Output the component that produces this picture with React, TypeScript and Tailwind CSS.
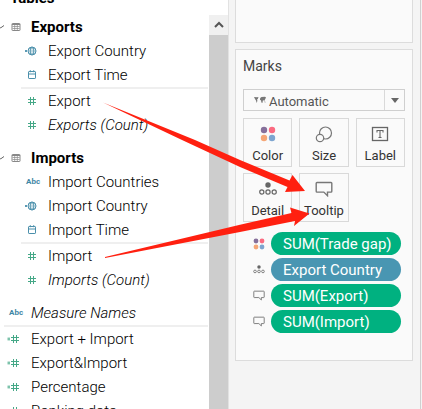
import type { ReactNode } from 'react';

type Kind = 'geo' | 'date' | 'number' | 'calc' | 'text';

const glyphs: Record<Kind, ReactNode> = {
  geo: (
    <svg viewBox="0 0 14 12" className="h-3 w-3.5" fill="none" stroke="#4a8fab">
      <circle cx="8" cy="6" r="4" />
      <ellipse cx="8" cy="6" rx="1.7" ry="4" strokeWidth=".8" />
      <path d="M4 6h8M5 3.800h6M5 8.200h6" strokeWidth=".7" />
      <path d="M1 5.500h2M1 6.500h2" strokeWidth=".9" />
    </svg>
  ),
  date: (
    <svg viewBox="0 0 14 12" className="h-3 w-3.5" fill="none" stroke="#4a8fab">
      <rect x="4.500" y="2.500" width="7" height="7" rx=".6" />
      <path d="M4.500 5h7M6.300 1.200v2M9.700 1.200v2" />
    </svg>
  ),
  number: (
    <svg viewBox="0 0 14 12" className="h-3 w-3.5" fill="none" stroke="#45a887">
      <path d="M4 4.500h8M4 7.500h8M6.500 2v8M9.500 2v8" />
    </svg>
  ),
  calc: (
    <svg viewBox="0 0 14 12" className="h-3 w-3.5" fill="none" stroke="#45a887">
      <path d="M4 4.500h8M4 7.500h8M6.500 2v8M9.500 2v8M.5 5.200h2.500M.5 6.800h2.500" />
    </svg>
  ),
  text: <span className="pl-0.5 text-[8px] font-bold text-[#3f86a4]">Abc</span>,
};

function Field({ kind, label, italic, nested }: { kind: Kind; label: string; italic?: boolean; nested?: boolean }) {
  return (
    <li className={`flex h-6 items-center ${nested ? 'pl-6' : 'pl-[7px]'}`}>
      <span className="flex w-6 shrink-0 items-center">{glyphs[kind]}</span>
      <span className={`whitespace-nowrap ${italic ? 'italic' : ''}`}>{label}</span>
    </li>
  );
}

function TableName({ label }: { label: string }) {
  return (
    <h3 className="flex h-6 items-center font-bold text-black">
      <svg viewBox="0 0 5 12" className="h-3 w-[5px]" fill="none" stroke="#666">
        <path d="M-2 4l2.500 3L4 4.500" />
      </svg>
      <svg viewBox="0 0 10 10" className="mr-2.5 ml-1.5 h-2.5 w-2.5" fill="none" stroke="#888">
        <rect x="1" y="1.500" width="8" height="7" rx=".5" />
        <path d="M1 2.500h8" />
        <path d="M1.500 4.500h7M1.500 6.500h7M3.700 3v5M6.300 3v5" strokeWidth=".7" />
      </svg>
      {label}
    </h3>
  );
}

const Rule = ({ nested }: { nested?: boolean }) => (
  <hr className={`mr-px border-t-2 border-[#efefef] ${nested ? 'ml-[21px]' : 'ml-1'}`} />
);

function ColorDots({ className }: { className: string }) {
  return (
    <svg viewBox="0 0 16 16" className={className}>
      <circle cx="4" cy="4" r="3.200" fill="#86709b" />
      <circle cx="12" cy="4" r="3.200" fill="#fb6a80" />
      <circle cx="4" cy="12" r="3.200" fill="#f5a676" />
      <circle cx="12" cy="12" r="3.200" fill="#7da5d0" />
    </svg>
  );
}

function DetailDots({ className }: { className: string }) {
  return (
    <svg viewBox="0 0 18 14" className={className} fill="none" stroke="#666" strokeWidth="1.2">
      <circle cx="9" cy="3" r="2.700" fill="#666" stroke="none" />
      <circle cx="2.800" cy="10" r="2.100" />
      <circle cx="9" cy="10" r="2.100" />
      <circle cx="15.200" cy="10" r="2.100" />
    </svg>
  );
}

function Bubble({ className }: { className: string }) {
  return (
    <svg viewBox="0 0 18 16" className={className} fill="none" stroke="#777" strokeWidth="1.4">
      <path d="M2 1.500h14q.8 0 .8.8v8q0 .8-.8.8h-3.500v3.600L8.800 11.100H2q-.8 0-.8-.8v-8q0-.8.800-.8z" />
    </svg>
  );
}

function MarkButton({ label, children }: { label: string; children: ReactNode }) {
  return (
    <button type="button" className="flex h-[49px] flex-col items-center border border-[#d9d9d9] pt-1.5 text-[13px] leading-5 font-normal text-[#333]">
      <span className="mb-[3px] flex h-5 items-center">{children}</span>
      {label}
    </button>
  );
}

function Pill({ label, blue, children }: { label: string; blue?: boolean; children: ReactNode }) {
  return (
    <li className="flex items-center">
      <span className="flex w-7 justify-center pl-[3px]">{children}</span>
      <span className={`h-[23px] flex-1 rounded-full pl-3 text-[15px] leading-6 font-normal whitespace-nowrap text-white ${blue ? 'bg-[#4996b2]' : 'bg-[#00b180]'}`}>
        {label}
      </span>
    </li>
  );
}

export default function App() {
  return (
    <main className="relative flex h-screen overflow-hidden bg-[#f4f4f4] font-['Roboto',sans-serif] text-[15px] leading-6 font-light text-black">
      <section className="flex min-w-0 flex-1 bg-white">
        <div className="-mt-3.5 min-w-0 flex-1">
          <h2 className="mb-[5px] h-6 pl-2.5 font-bold text-black">Tables</h2>
          <TableName label="Exports" />
          <ul>
            <Field nested kind="geo" label="Export Country" />
            <Field nested kind="date" label="Export Time" />
          </ul>
          <Rule nested />
          <ul className="mb-[9px]">
            <Field nested kind="number" label="Export" />
            <Field nested kind="number" label="Exports (Count)" italic />
          </ul>
          <TableName label="Imports" />
          <ul>
            <Field nested kind="text" label="Import Countries" />
            <Field nested kind="geo" label="Import Country" />
            <Field nested kind="date" label="Import Time" />
          </ul>
          <Rule nested />
          <ul className="mb-[9px]">
            <Field nested kind="number" label="Import" />
            <Field nested kind="number" label="Imports (Count)" italic />
          </ul>
          <ul>
            <Field kind="text" label="Measure Names" italic />
          </ul>
          <Rule />
          <ul>
            <Field kind="calc" label="Export + Import" />
            <Field kind="calc" label="Export&Import" />
            <Field kind="calc" label="Percentage" />
            <Field kind="calc" label="Ranking data" />
          </ul>
        </div>
        <div className="mt-[15px] w-[19px] bg-[#cdcdcd]">
          <button type="button" aria-label="Scroll up" className="flex h-5 w-full items-center justify-center bg-[#f0f0f0]">
            <svg viewBox="0 0 10 8" className="h-2 w-2.5" fill="none" stroke="#555" strokeWidth="2">
              <path d="M1 6l4-4 4 4" />
            </svg>
          </button>
        </div>
      </section>

      <aside className="w-[194px] shrink-0 border-l border-l-[#e2e2e2] pl-1.5">
        <div className="mr-px h-full border-r border-[#d0d0d0] pr-[7px]">
          <div className="h-[43px] border border-t-0 border-[#dcdcdc] bg-[#fafafa]" />
          <section className="mt-1.5 h-[312px] border border-[#dcdcdc] bg-[#fafafa] px-[7px] pt-1">
            <h2 className="text-[14px] font-normal text-[#444]">Marks</h2>
            <div className="relative mt-[11px] flex h-[22px] items-center border border-[#cfcfcf]">
              <svg viewBox="0 0 12 8" className="absolute left-2.5 h-2 w-3" fill="#777">
                <path d="M0 1l3 .2L4.500 1 3.800 3 3 3.500l.4 1.300L2.700 7 2 4.500 1 3zM6.200 2l1.300-1L11 .8l1 .8-1 2-.8 1.500L9 4l-.6 3-1-.5L7 4.200 6 4zM10 5.500l1.500.3-.3 1z" />
              </svg>
              <select aria-label="Mark type" className="h-full w-full appearance-none bg-transparent pb-0.5 pl-[25px] text-[13px] font-normal text-[#555]">
                <option>Automatic</option>
              </select>
              <span className="pointer-events-none absolute inset-y-0 right-0 flex w-5 items-center justify-center border-l border-[#d9d9d9]">
                <svg viewBox="0 0 8 5" className="h-[5px] w-2" fill="#666">
                  <path d="M0 0h8L4 5z" />
                </svg>
              </span>
            </div>
            <div className="mt-[7px] grid grid-cols-3 gap-x-[7px] gap-y-1.5">
              <MarkButton label="Color"><ColorDots className="h-4 w-4" /></MarkButton>
              <MarkButton label="Size">
                <svg viewBox="0 0 18 17" className="h-[17px] w-[18px]" fill="none" stroke="#777" strokeWidth="1.2">
                  <circle cx="10.500" cy="7" r="6" />
                  <circle cx="5" cy="12" r="3.700" fill="#fafafa" />
                </svg>
              </MarkButton>
              <MarkButton label="Label">
                <svg viewBox="0 0 18 16" className="h-4 w-[18px]" fill="none" stroke="#666" strokeWidth="1.3">
                  <rect x="1.500" y="1.500" width="15" height="13" />
                  <path d="M6 6.500v-2h6v2M9 4.500v7M7.500 11.500h3" strokeWidth="1.100" />
                </svg>
              </MarkButton>
              <MarkButton label="Detail"><DetailDots className="h-3.5 w-[18px]" /></MarkButton>
              <MarkButton label="Tooltip"><Bubble className="h-4 w-[18px]" /></MarkButton>
            </div>
            <ul className="mt-2.5 flex flex-col gap-[3px] pr-1">
              <Pill label="SUM(Trade gap)"><ColorDots className="h-3 w-3" /></Pill>
              <Pill label="Export Country" blue><DetailDots className="h-[9px] w-3" /></Pill>
              <Pill label="SUM(Export)"><Bubble className="h-[11px] w-3" /></Pill>
              <Pill label="SUM(Import)"><Bubble className="h-[11px] w-3" /></Pill>
            </ul>
          </section>
        </div>
      </aside>

      <svg viewBox="0 0 422 409" className="pointer-events-none absolute top-0 right-0 h-[409px] w-[422px]" fill="#ff2010">
        <path d="M103 102.500L195 140l45 20 49.500 20.500 3-5.500L305 191l-20 1 2.500-5L240 167l-58-27z" />
        <path d="M105 257L240 224.700l51.500-11.700-1.500-5.500 19.500 6L294 226l1-5-55 11-135 26z" />
      </svg>
    </main>
  );
}
